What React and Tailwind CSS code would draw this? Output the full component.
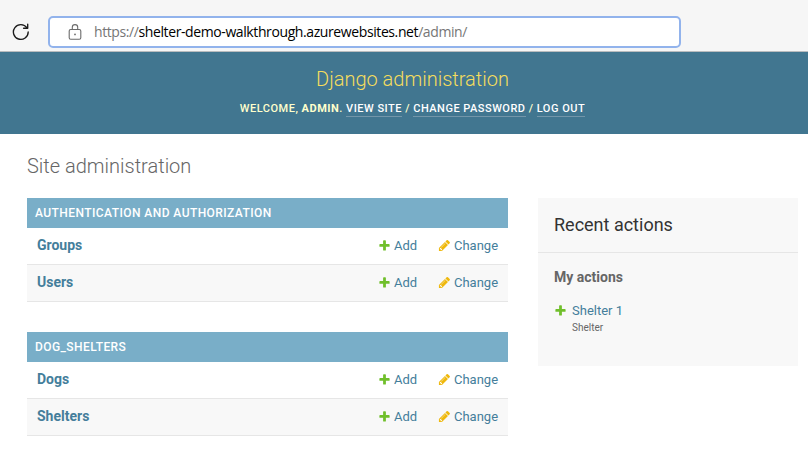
function PlusIcon() {
  return (
    <svg width="13" height="13" viewBox="0 0 1792 1792" className="mb-0.5 shrink-0">
      <path
        fill="#70bf2b"
        d="M1600 796v192q0 40-28 68t-68 28h-416v416q0 40-28 68t-68 28h-192q-40 0-68-28t-28-68v-416h-416q-40 0-68-28t-28-68v-192q0-40 28-68t68-28h416v-416q0-40 28-68t68-28h192q40 0 68 28t28 68v416h416q40 0 68 28t28 68z"
      />
    </svg>
  );
}

function PencilIcon() {
  return (
    <svg width="13" height="13" viewBox="0 0 1792 1792" className="mb-0.5 shrink-0">
      <path
        fill="#efb80b"
        d="M491 1536l91-91-235-235-91 91v107h128v128h107zm523-928q0-22-22-22-10 0-17 7l-542 542q-7 7-7 17 0 22 22 22 10 0 17-7l542-542q7-7 7-17zm-54-192l416 416-832 832h-416v-416zm683 96q0 53-37 90l-166 166-416-416 166-165q36-38 90-38 53 0 91 38l235 234q37 39 37 91z"
      />
    </svg>
  );
}

function ReloadIcon() {
  return (
    <svg width="18" height="18" viewBox="0 0 18 18" fill="none" stroke="#1b1b1b" strokeWidth="1.35" strokeLinecap="round" strokeLinejoin="round">
      <path d="M16.2 9A7.4 7.4 0 1 1 14.9 4.8" />
      <path d="M15.7 1.2V5.2H11.6" />
    </svg>
  );
}

function LockIcon() {
  return (
    <svg width="14" height="17" viewBox="0 0 14 17" fill="none" stroke="#6b6b6b" strokeWidth="1.1">
      <rect x="1.2" y="5.5" width="11.6" height="9.8" rx="1.5" />
      <path d="M4.3 5.5V3.3a2.7 2.7 0 0 1 5.4 0v2.2" />
      <circle cx="7" cy="10.4" r="0.9" fill="#6b6b6b" stroke="none" />
    </svg>
  );
}

function AddressBar() {
  return (
    <div className="flex h-[52px] items-start border-b border-[#b9bcbe] bg-[#f6f6f6] pt-4">
      <div className="flex h-8 w-12 items-center pl-3">
        <ReloadIcon />
      </div>
      <div className="flex h-8 w-[633px] items-center rounded-[5px] border-2 border-[#92b3ec] bg-white pl-[18px]">
        <LockIcon />
        <div className="ml-3 whitespace-nowrap font-['Open_Sans','Noto_Sans',sans-serif] text-sm leading-5 tracking-[-0.4px] text-[#767676]">
          https://<span className="text-black">shelter-demo-walkthrough.azurewebsites.net</span>/admin/
        </div>
      </div>
    </div>
  );
}

function HeaderLink({ children }) {
  return <a className="border-b border-[#7396aa] pb-px text-white">{children}</a>;
}

function Header() {
  return (
    <header className="flex h-[82px] flex-col items-center bg-[#417690] pl-[17px] pt-[15px] text-[#ffffcc]">
      <h1 className="text-xl font-light leading-6 text-[#f5dd5d]">Django administration</h1>
      <div className="mt-[11px] whitespace-nowrap text-[11px] font-medium uppercase leading-[14px] tracking-[0.5px]">
        Welcome, <strong className="font-bold">admin</strong>. <HeaderLink>View site</HeaderLink> /{" "}
        <HeaderLink>Change password</HeaderLink> / <HeaderLink>Log out</HeaderLink>
      </div>
    </header>
  );
}

function Module({ title, models }) {
  return (
    <section>
      <h2 className="flex h-[30px] items-center bg-[#79aec8] px-2 text-xs font-medium uppercase tracking-[0.43px] text-white">
        {title}
      </h2>
      {models.map((name) => (
        <div
          key={name}
          className="flex h-[37px] items-center border-b border-[#e6e6e6] pl-2.5 pr-2.5 text-[13px] text-[#447e9b] even:bg-white odd:bg-[#f8f8f8]"
        >
          <a className="flex-1 pb-0.5 text-sm font-bold">{name}</a>
          <a className="flex w-[60px] items-center gap-[3px]">
            <PlusIcon />
            Add
          </a>
          <a className="flex w-[60px] items-center gap-[3px]">
            <PencilIcon />
            Change
          </a>
        </div>
      ))}
    </section>
  );
}

function RecentActions() {
  return (
    <aside className="h-[168px] w-[260px] bg-[#f8f8f8]">
      <h2 className="flex h-[55px] items-center border-b border-[#e6e6e6] px-4 text-lg font-normal text-[#333]">
        Recent actions
      </h2>
      <div className="px-4 pt-[15px]">
        <h3 className="text-sm font-bold leading-[18px] text-[#666]">My actions</h3>
        <div className="mt-4 flex items-center gap-[5px] text-[13px] leading-[18px] text-[#447e9b]">
          <PlusIcon />
          Shelter 1
        </div>
        <div className="pl-[18px] text-[10px] leading-4 text-[#666]">Shelter</div>
      </div>
    </aside>
  );
}

export default function App() {
  return (
    <div className="h-[456px] w-[808px] overflow-hidden bg-white font-['Roboto',sans-serif]">
      <AddressBar />
      <Header />
      <main className="pl-[27px] pt-5">
        <h1 className="text-xl font-light leading-6 text-[#666]">Site administration</h1>
        <div className="mt-5 flex items-start gap-[30px]">
          <div className="flex w-[481px] flex-col gap-[30px]">
            <Module title="Authentication and Authorization" models={["Groups", "Users"]} />
            <Module title="Dog_Shelters" models={["Dogs", "Shelters"]} />
          </div>
          <RecentActions />
        </div>
      </main>
    </div>
  );
}
